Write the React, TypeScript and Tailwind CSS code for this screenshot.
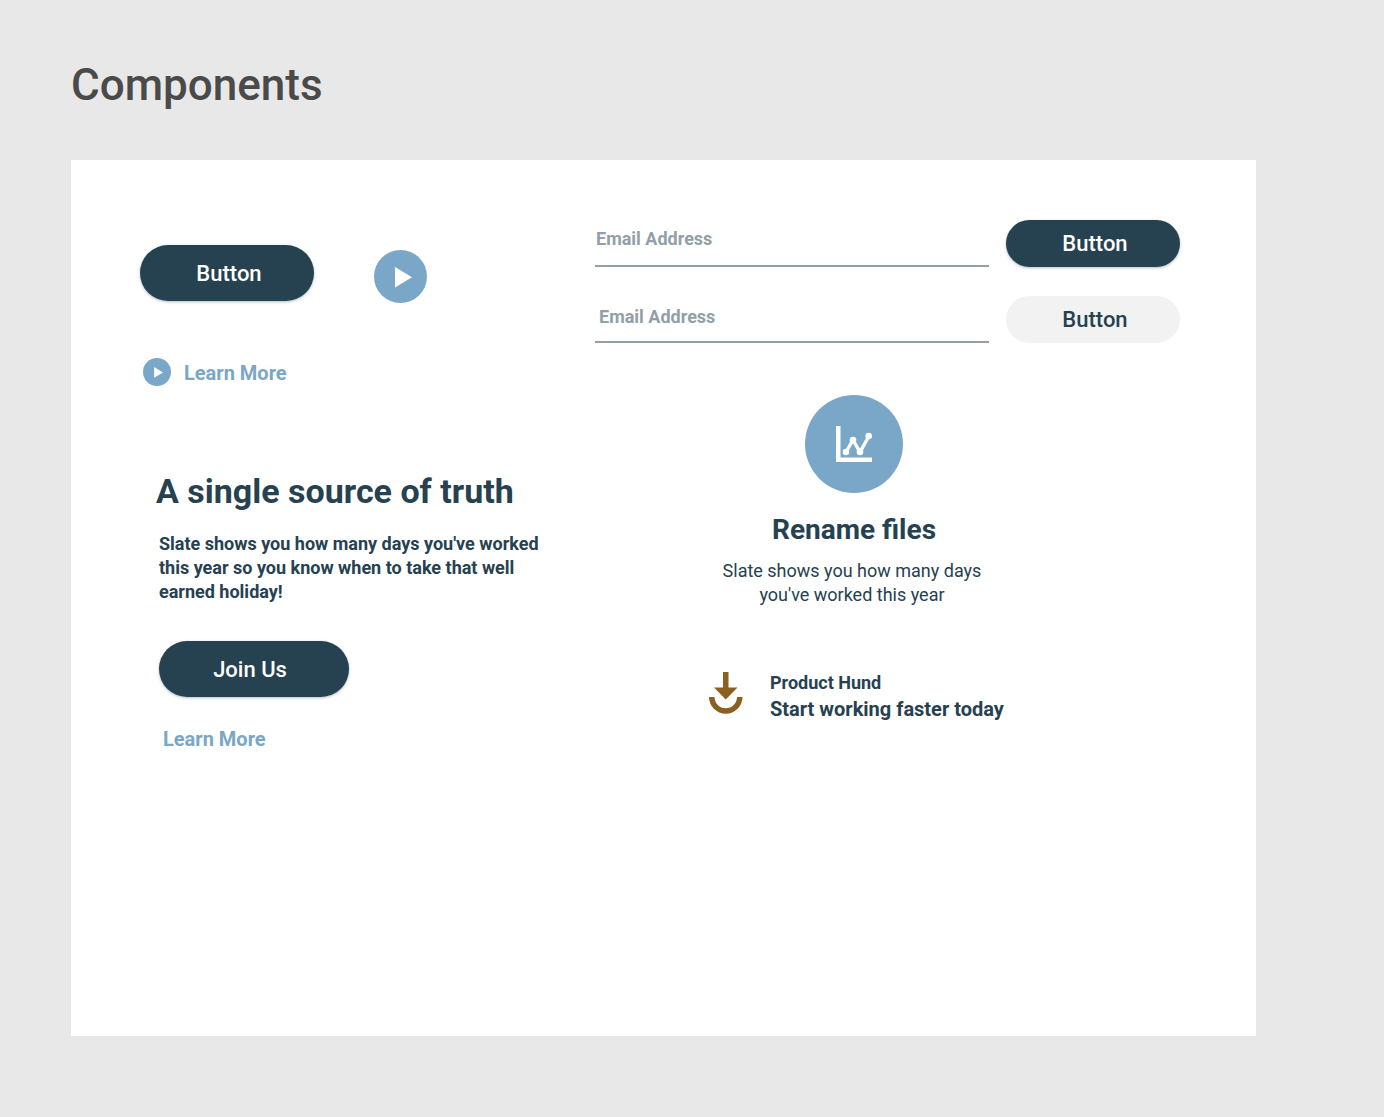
import type { ReactNode } from "react";

type PillProps = {
  children: ReactNode;
  tone?: "dark" | "light";
  size?: "md" | "lg";
  className?: string;
};

function Pill({ children, tone = "dark", size = "lg", className = "" }: PillProps) {
  const toneClass =
    tone === "dark"
      ? "bg-[#264150] text-white shadow-[0_1px_3px_rgba(38,65,80,0.35)]"
      : "bg-[#f2f2f2] text-[#264150]";
  const sizeClass = size === "lg" ? "h-14 pt-0.5" : "h-[47px]";
  return (
    <button
      type="button"
      className={`shrink-0 rounded-full text-center text-[22px] leading-7 font-medium ${toneClass} ${sizeClass} ${className}`}
    >
      {children}
    </button>
  );
}

function PlayIcon({ className = "" }: { className?: string }) {
  return (
    <svg viewBox="0 0 53 53" aria-hidden="true" className={className}>
      <circle cx="26.5" cy="26.5" r="26.5" fill="#7aa7c7" />
      <path d="M21 17v20.500l17-10.250z" fill="#fff" />
    </svg>
  );
}

function ChartIcon() {
  return (
    <svg viewBox="0 0 98 98" aria-hidden="true" className="size-[98px]">
      <circle cx="49" cy="49" r="49" fill="#7aa7c7" />
      <path d="M31 31h4.500v31.500H67V67H31z" fill="#fff" />
      <path d="M41 57l7-12L55 57l9-16" fill="none" stroke="#fff" strokeWidth="3.400" />
      <g fill="#fff">
        <circle cx="41" cy="57" r="3.300" />
        <circle cx="48" cy="45" r="3.300" />
        <circle cx="55" cy="57" r="3.300" />
        <circle cx="63.700" cy="41" r="3.300" />
      </g>
    </svg>
  );
}

function DownloadIcon() {
  return (
    <svg viewBox="0 0 34 42" aria-hidden="true" className="mt-px h-[42px] w-[34px] shrink-0">
      <path d="M14 0h5.500v15.500h9L16.750 27.500 5 15.500h9z" fill="#8a6020" />
      <path d="M0 25h5.500a11.250 11.250 0 0 0 22.500 0h5.500a16.750 16.750 0 0 1-33.500 0z" fill="#8a6020" />
    </svg>
  );
}

type EmailRowProps = { name: string; tone: "dark" | "light"; inputClass: string };

function EmailRow({ name, tone, inputClass }: EmailRowProps) {
  return (
    <form className="flex gap-[17px]">
      <input
        type="email"
        name={name}
        aria-label="Email Address"
        placeholder="Email Address"
        className={`h-[47px] min-w-0 flex-1 border-b-2 border-[#929fa7] bg-transparent text-lg leading-6 font-bold text-[#264150] outline-none placeholder:text-[#929fa7] ${inputClass}`}
      />
      <Pill tone={tone} size="md" className="w-[174px] pl-1">
        Button
      </Pill>
    </form>
  );
}

export default function App() {
  return (
    <main className="min-h-screen bg-[#e8e8e8] pt-[58px] pr-32 pb-20 pl-[71px] font-['Roboto',sans-serif] text-[#264150]">
      <h1 className="text-[44px] leading-[54px] font-medium text-[#4a4a4a]">Components</h1>

      <div className="mt-12 grid min-h-[876px] grid-cols-[7fr_9fr] content-start bg-white pt-[60px] pr-[76px] pb-16 pl-[69px]">
        <section className="pt-[25px]">
          <div className="flex items-start gap-[60px]">
            <Pill className="w-[174px] pl-1">Button</Pill>
            <button type="button" aria-label="Play" className="mt-[5px]">
              <PlayIcon className="size-[53px]" />
            </button>
          </div>

          <a
            href="#learn"
            className="mt-[54px] ml-[3px] flex w-fit items-center gap-[13px] text-xl leading-7 font-bold text-[#7aa7c7]"
          >
            <PlayIcon className="size-7" />
            <span className="pt-0.5">Learn More</span>
          </a>

          <h2 className="mt-21 ml-4 text-[34px] leading-10 font-bold">A single source of truth</h2>
          <div className="pl-[19px]">
            <p className="mt-[21px] text-lg leading-6 font-bold">
              Slate shows you how many days you've worked
              <br />
              this year so you know when to take that well
              <br />
              earned holiday!
            </p>
            <Pill className="mt-[37px] w-[190px] pr-2">Join Us</Pill>
            <a href="#more" className="mt-7 ml-1 block w-fit text-xl leading-7 font-bold text-[#7aa7c7]">
              Learn More
            </a>
          </div>
        </section>

        <section>
          <div className="flex flex-col gap-[29px]">
            <EmailRow name="email-primary" tone="dark" inputClass="pb-2 pl-px" />
            <EmailRow name="email-secondary" tone="light" inputClass="pb-1 pl-1" />
          </div>

          <article className="mt-[52px] flex flex-col items-center pr-[67px] text-center">
            <ChartIcon />
            <h3 className="mt-[21px] text-[28px] leading-8 font-bold">Rename files</h3>
            <p className="mt-[13px] pr-1 text-lg leading-6">
              Slate shows you how many days
              <br />
              you've worked this year
            </p>
          </article>

          <article className="mt-16 ml-[114px] flex items-start gap-[27px]">
            <DownloadIcon />
            <div>
              <h4 className="text-lg leading-6 font-bold">Product Hund</h4>
              <p className="text-xl leading-7 font-bold">Start working faster today</p>
            </div>
          </article>
        </section>
      </div>
    </main>
  );
}
